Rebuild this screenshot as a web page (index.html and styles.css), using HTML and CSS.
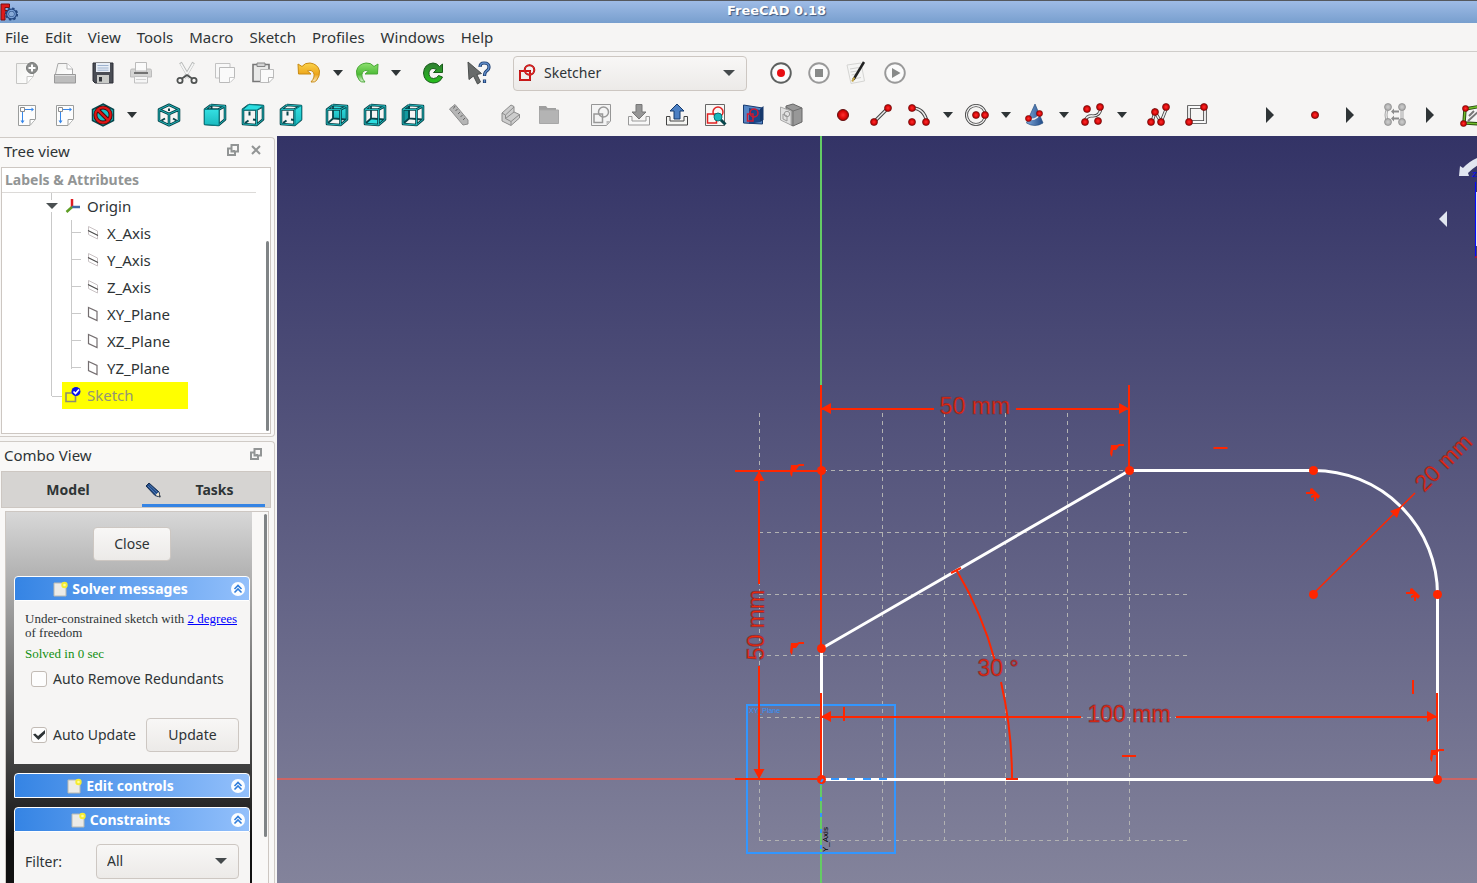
FILE: index.html
```html
<!DOCTYPE html>
<html lang="en">
<head>
<meta charset="utf-8">
<title>FreeCAD 0.18</title>
<link rel="stylesheet" href="styles.css">
</head>
<body>
<svg class="defs" aria-hidden="true">
  <defs>
    <linearGradient id="paper" x1="0" y1="0" x2="1" y2="1"><stop offset="0" stop-color="#f1f1ef"/><stop offset="1" stop-color="#ffffff"/></linearGradient>
    <linearGradient id="gold" x1="0" y1="0" x2="0" y2="1"><stop offset="0" stop-color="#fbd34b"/><stop offset="0.6" stop-color="#eda51a"/><stop offset="1" stop-color="#fbeecb"/></linearGradient>
    <linearGradient id="lime" x1="0" y1="0" x2="0" y2="1"><stop offset="0" stop-color="#8ee070"/><stop offset="0.6" stop-color="#4cba35"/><stop offset="1" stop-color="#e0f5da"/></linearGradient>
    <linearGradient id="teal" x1="0" y1="0" x2="0" y2="1"><stop offset="0" stop-color="#34e0e2"/><stop offset="1" stop-color="#1bb9bf"/></linearGradient>
    <linearGradient id="green" x1="0" y1="0" x2="0" y2="1"><stop offset="0" stop-color="#2f7d32"/><stop offset="1" stop-color="#25c11b"/></linearGradient>
    <linearGradient id="blue" x1="0" y1="0" x2="1" y2="0"><stop offset="0" stop-color="#7fa8da"/><stop offset="1" stop-color="#204a87"/></linearGradient>
    <radialGradient id="red"><stop offset="0" stop-color="#ff3030"/><stop offset="0.6" stop-color="#dd0b0b"/><stop offset="1" stop-color="#b00000"/></radialGradient>
    <radialGradient id="gray"><stop offset="0" stop-color="#cfcfcf"/><stop offset="1" stop-color="#a8a8a8"/></radialGradient>
  </defs>
  <symbol id="dot" viewBox="0 0 8 8"><circle cx="4" cy="4" r="3.5" fill="url(#red)" stroke="#6b1010" stroke-width=".7"/></symbol>
  <symbol id="gdot" viewBox="0 0 8 8"><circle cx="4" cy="4" r="3.5" fill="url(#gray)" stroke="#8b8b8b" stroke-width=".7"/></symbol>
  <symbol id="wire" viewBox="0 0 24 24">
    <path d="M2 6.500H15.500V22L2 21ZM8 2L22 3V16.500L15.500 22M8 2L2 6.500M22 3L15.500 6.500" fill="none" stroke="#07454b" stroke-width="2.600" stroke-linejoin="round"/>
    <path d="M2 6.500H15.500V22L2 21ZM8 2L22 3V16.500L15.500 22M8 2L2 6.500M22 3L15.500 6.500" fill="none" stroke="#1fb4b8" stroke-width="1" stroke-linejoin="round"/>
  </symbol>
  <symbol id="marks" viewBox="0 0 24 24"><path d="M8.500 8.500V12.500M12 16.500L15 17M4 20L7.500 17.500" stroke="#07454b" stroke-width="2"/></symbol>
  <symbol id="backbars" viewBox="0 0 24 24"><path d="M8 3V15.500L21 16.500M8 15.500L3 20" fill="none" stroke="#07454b" stroke-width="1.800"/></symbol>
  <symbol id="new" viewBox="0 0 24 24"><path d="M1.500 2.500H18.500V15L12 22.500H1.500Z" fill="url(#paper)" stroke="#c6c6c4"/><path d="M12 22V15.500H18" fill="#fff" stroke="#c6c6c4"/><circle cx="17" cy="7" r="5.500" fill="#8b8d8c" stroke="#767877"/><path d="M17 3.500v7M13.500 7h7" stroke="#fff" stroke-width="2"/></symbol>
  <symbol id="open" viewBox="0 0 24 24"><path d="M2.500 13L5 2.500H14L19.500 8V13" fill="url(#paper)" stroke="#aaa"/><path d="M14 2.500V8H19.500" fill="#fff" stroke="#b5b5b5"/><path d="M1.500 13.500H22.500V22H1.500Z" fill="#bdbdbd" stroke="#999"/><path d="M2 14.500H22" stroke="#ddd"/></symbol>
  <symbol id="save" viewBox="0 0 24 24"><path d="M2 2H22V22H4L2 20Z" fill="#4a4d55" stroke="#2c2f36"/><path d="M5 2H19V11H5Z" fill="#e8eef6"/><path d="M6.500 4.500h11M6.500 7h11M6.500 9.200h11" stroke="#9db2cf"/><path d="M6 14H18V22H6Z" fill="#c9cbc8"/><path d="M8 16H11V20.500H8Z" fill="#33363c"/></symbol>
  <symbol id="print" viewBox="0 0 24 24"><path d="M6.500 1.500H17.500V10H6.500Z" fill="#fafafa" stroke="#bbb"/><path d="M1.500 9.500Q1.500 8 3 8H6.500V11H17.500V8H21Q22.500 8 22.500 9.500V16H1.500Z" fill="#d4d4d3" stroke="#bcbcbc"/><path d="M5 12H19" stroke="#686868" stroke-width="1.800"/><path d="M5.500 15.500H18.500V22H5.500Z" fill="#f6f6f6" stroke="#c1c1c1"/><path d="M7 18.500H17" stroke="#d2d2d2"/></symbol>
  <symbol id="cut" viewBox="0 0 24 24"><path d="M5.500 1.500L14.500 17M18.500 1.500L9.500 17" stroke="#b7b9b8" stroke-width="3"/><path d="M5.800 2.500L14 16.500M18.200 2.500L10 16.500" stroke="#f6f6f6" stroke-width="1.600"/><circle cx="5" cy="19.500" r="2.600" fill="none" stroke="#505352" stroke-width="1.800"/><circle cx="19" cy="19.500" r="2.600" fill="none" stroke="#505352" stroke-width="1.800"/><path d="M7 17.500L12 14L17 17.500" fill="none" stroke="#505352" stroke-width="1.800"/></symbol>
  <symbol id="copy" viewBox="0 0 24 24"><path d="M2.500 2.500H17V17H2.500Z" fill="#f8f8f8" stroke="#c2c2c2"/><path d="M6.500 6.500H21.500V17L17 21.500H6.500Z" fill="#fafafa" stroke="#bababa"/><path d="M16.500 21.500V16.500H21.500" fill="#fff" stroke="#c7c7c7"/></symbol>
  <symbol id="paste" viewBox="0 0 24 24"><path d="M2 3.500H18V20.500H2Z" fill="#e9e9e8" stroke="#777" stroke-width="1.600"/><path d="M6 2H14V5.500H6Z" fill="#d3d3d3" stroke="#858585"/><path d="M9.500 8.500H22.500V17L18 21.500H9.500Z" fill="#fafafa" stroke="#bbb"/><path d="M17.500 21V16.500H22" fill="#fff" stroke="#b5b5b5"/></symbol>
  <symbol id="undo" viewBox="0 0 24 24"><path d="M1 3L5 5.500Q8 1.500 13 2Q21 3 22.500 10Q23 15 19.500 19.500Q18 21.500 14 21Q18.500 16 16.500 11.500Q14.500 8 10.500 10L14 13H1.500Z" fill="url(#gold)" stroke="#c98b12"/></symbol>
  <symbol id="redo" viewBox="0 0 24 24"><path d="M23 3L19 5.500Q16 1.500 11 2Q3 3 1.500 10Q1 15 4.500 19.500Q6 21.500 10 21Q5.500 16 7.500 11.500Q9.500 8 13.500 10L10 13H22.500Z" fill="url(#lime)" stroke="#4aa836"/></symbol>
  <symbol id="refresh" viewBox="0 0 24 24"><path d="M21.500 3V11.500H12.500L15.500 8.500Q10 5.500 8 11Q7.500 17 12.500 17.500Q16 17.500 17.500 14.500L21.500 16Q19 22 12 22Q3 21 2.500 12Q3 3 12 2Q16 2 18.500 5.500Z" fill="url(#green)" stroke="#195c1b"/></symbol>
  <symbol id="whats" viewBox="0 0 24 24"><path d="M1 1L14.500 12.500L9.800 13.500L13.500 21L10.500 23L6.500 15L2 18.500Z" fill="#686b6a" stroke="#4b4e4d"/><path d="M13 6Q13 2 17 2Q22 2 22 6Q22 8.500 19.500 10Q17.500 11.500 17.500 15M17.500 18.500V22" fill="none" stroke="#1e3e70" stroke-width="3.200"/><path d="M13 6Q13 2 17 2Q22 2 22 6Q22 8.500 19.500 10Q17.500 11.500 17.500 14.500M17.500 19V21.500" fill="none" stroke="#5f8cc8" stroke-width="1.400"/></symbol>
  <symbol id="sketcher" viewBox="0 0 18 18"><path d="M2 7H12V16H2Z" fill="none" stroke="#a01010" stroke-width="2"/><circle cx="11.500" cy="6" r="4.800" fill="none" stroke="#a01010" stroke-width="2"/><path d="M2 7H12V16H2Z" fill="none" stroke="#f02222" stroke-width="1"/><circle cx="11.500" cy="6" r="4.800" fill="none" stroke="#f02222"/></symbol>
  <symbol id="record" viewBox="0 0 24 24"><circle cx="12" cy="12" r="9.800" fill="#fbfbfb" stroke="#5d605f" stroke-width="1.900"/><circle cx="12" cy="12" r="4" fill="#e80d12"/></symbol>
  <symbol id="stop" viewBox="0 0 24 24"><circle cx="12" cy="12" r="9.800" fill="#fbfbfb" stroke="#999" stroke-width="1.900"/><path d="M8 8H16V16H8Z" fill="#888a89"/></symbol>
  <symbol id="play" viewBox="0 0 24 24"><circle cx="12" cy="12" r="9.800" fill="#fbfbfb" stroke="#999" stroke-width="1.900"/><path d="M9 7L17.500 12L9 17Z" fill="#888a89"/></symbol>
  <symbol id="macro" viewBox="0 0 24 24"><path d="M2 4L16 2L19.500 20L6 22.500Z" fill="#f5f5f4" stroke="#d5d5d3"/><path d="M5 8L14 6.500M5.500 11L12 10M6.500 14L11 13M7.500 18L16 16.500" stroke="#d0d0ce"/><path d="M19 1L8.500 18.500" stroke="#222" stroke-width="2.500"/><path d="M9.300 16.500L7.200 20.500" stroke="#c2a343" stroke-width="2"/></symbol>
  <symbol id="page" viewBox="0 0 24 24"><path d="M3.500 2.500H20.500V16L15 22.500H3.500Z" fill="#fdfdfd" stroke="#9b9d9c"/><path d="M15 22V16.500H20" fill="#fff" stroke="#9b9d9c"/><path d="M5.500 4.500H9.500V8.500H5.500Z" fill="none" stroke="#8c8c8c"/><path d="M10 6.500H18M7.500 9V18.500" stroke="#3787ea"/><path d="M16.500 4.500L19 6.500L16.500 8.500ZM5.500 17.500H9.500L7.500 20.500Z" fill="#3787ea"/></symbol>
  <symbol id="nodraw" viewBox="0 0 24 24"><path d="M12 1L22.500 6.500V17.500L12 23L1.500 17.500V6.500Z" fill="#1bbfc5" stroke="#07454b" stroke-width="1.500"/><circle cx="12" cy="12" r="7.600" fill="none" stroke="#450b0b" stroke-width="4"/><path d="M6.500 6.500L17.500 17.500" stroke="#450b0b" stroke-width="4"/><circle cx="12" cy="12" r="7.600" fill="none" stroke="#df1515" stroke-width="2.200"/><path d="M6.500 6.500L17.500 17.500" stroke="#df1515" stroke-width="2.200"/></symbol>
  <symbol id="iso" viewBox="0 0 24 24"><path d="M12 1.800L22 6.500V17.500L12 22.300L2 17.500V6.500ZM2 6.500L12 11L22 6.500M12 11V22" fill="none" stroke="#07454b" stroke-width="2.600" stroke-linejoin="round"/><path d="M4.500 17.500L8 15.500M19.500 17.500L16 15.500M12 5.500V8" stroke="#07454b" stroke-width="2"/><path d="M12 1.800L22 6.500V17.500L12 22.300L2 17.500V6.500ZM2 6.500L12 11L22 6.500M12 11V22" fill="none" stroke="#1fb4b8"/></symbol>
  <symbol id="front" viewBox="0 0 24 24"><use href="#wire"/><path d="M8.500 3V6" stroke="#07454b" stroke-width="2"/><path d="M1.500 6.500H16V22.500L1.500 21.500Z" fill="url(#teal)" stroke="#087e84"/></symbol>
  <symbol id="top" viewBox="0 0 24 24"><use href="#marks"/><use href="#wire"/><path d="M8 1.500L22.500 2.500L16 7H1.500Z" fill="#2cdde0" stroke="#087e84"/></symbol>
  <symbol id="right" viewBox="0 0 24 24"><use href="#marks"/><use href="#wire"/><path d="M22.500 2.500V16.500L16 22.500V6.500Z" fill="url(#teal)" stroke="#087e84"/></symbol>
  <symbol id="rear" viewBox="0 0 24 24"><path d="M8 3L22 4V16L8 15Z" fill="url(#teal)"/><use href="#backbars"/><use href="#wire"/></symbol>
  <symbol id="bottom" viewBox="0 0 24 24"><path d="M8 15.500L22 16.500L16 22L2 21Z" fill="#2cdde0"/><use href="#backbars"/><use href="#wire"/></symbol>
  <symbol id="left" viewBox="0 0 24 24"><path d="M2 7L9 2V15L2 21Z" fill="#14999f"/><use href="#backbars"/><use href="#wire"/></symbol>
  <symbol id="ruler" viewBox="0 0 24 24"><path d="M2.500 6L8 1.500L21 17V21L16 22Z" fill="#b5b5b5" stroke="#8d8d8d"/><path d="M8 3L6.500 5.500M10.500 6L8.500 8M13 9L11 11M15.500 12L13.500 14M18 15L16 17" stroke="#666"/></symbol>
  <symbol id="part" viewBox="0 0 24 24"><path d="M3 10L12 2L15 3.500V9L20.500 11.500V15L12 22.500L3 18Z" fill="#cdcdcd" stroke="#8c8c8c"/><path d="M3 10L6.500 12L15 4M6.500 12V15.500L12 18.500L20.500 11.500M6.500 15.500L15 9M12 18.500V22" fill="none" stroke="#8c8c8c"/></symbol>
  <symbol id="group" viewBox="0 0 24 24"><path d="M2 3H9L10.500 5H19V8H2Z" fill="#9f9f9f"/><path d="M2.500 7H21.500V20.500H2.500Z" fill="#b4b4b4" stroke="#a7a7a7"/></symbol>
  <symbol id="sketchnew" viewBox="0 0 24 24"><path d="M2.500 1.500H21.500V18L17.500 22.500H2.500Z" fill="#f4f4f4" stroke="#969696"/><path d="M17.500 22V18H21" fill="#bbb"/><path d="M5 11H13.500V19.500H5Z" fill="none" stroke="#989898" stroke-width="1.500"/><circle cx="14.500" cy="9" r="5" fill="none" stroke="#989898" stroke-width="1.500"/></symbol>
  <symbol id="import" viewBox="0 0 24 24"><path d="M1.500 13.500H5V18H19V13.500H22.500V22H1.500Z" fill="#f8f8f8" stroke="#999"/><path d="M9 1.500H15V9H19L12 16L5 9H9Z" fill="#969696" stroke="#777"/></symbol>
  <symbol id="export" viewBox="0 0 24 24"><path d="M1.500 13.500H5V18H19V13.500H22.500V22H1.500Z" fill="#f5f5f2" stroke="#444"/><path d="M9 16V8H5L12 1L19 8H15V16Z" fill="#4b7fc3" stroke="#143a6d"/></symbol>
  <symbol id="viewsketch" viewBox="0 0 24 24"><path d="M2.500 1.500H21.500V22.500H2.500Z" fill="#f7f7f5" stroke="#666"/><path d="M4.500 11H13.500V20H4.500Z" fill="none" stroke="#e12222" stroke-width="1.500"/><circle cx="15" cy="9" r="5" fill="none" stroke="#e12222" stroke-width="1.500"/><path d="M17 16L22.500 21.500" stroke="#07454b" stroke-width="3"/><circle cx="15" cy="14" r="4" fill="#18b8bd" stroke="#087176"/></symbol>
  <symbol id="section" viewBox="0 0 24 24"><path d="M2.500 2L21.500 5V21L2.500 20Z" fill="#5585c4" stroke="#173b70"/><path d="M8 5L19 7V19L8 21Z" fill="#1c4687"/><path d="M19 6L22.500 3V17L19 19Z" fill="#16386c"/><path d="M6.500 11H12V18H6.500Z" fill="none" stroke="#d11a30" stroke-width="1.500"/><circle cx="13" cy="10" r="4" fill="none" stroke="#d11a30" stroke-width="1.500"/></symbol>
  <symbol id="mapface" viewBox="0 0 24 24"><path d="M7 3L14 1L23 5V19L14 23L7 19Z" fill="#989898" stroke="#666"/><path d="M14 8L23 5M14 8V23M7 4L14 8" stroke="#717171" fill="none"/><path d="M1.500 4L12 8V22L1.500 17Z" fill="#e1e1e1" stroke="#a9a9a9"/><path d="M4 11L8 13V18L4 16Z" fill="none" stroke="#999"/><circle cx="8" cy="11" r="2.700" fill="none" stroke="#999"/></symbol>
  <symbol id="point" viewBox="0 0 24 24"><circle cx="12" cy="12" r="5.500" fill="url(#red)" stroke="#651010"/></symbol>
  <symbol id="smallpoint" viewBox="0 0 24 24"><circle cx="12" cy="12" r="3.600" fill="url(#red)" stroke="#651010" stroke-width=".8"/></symbol>
  <symbol id="line" viewBox="0 0 24 24"><path d="M5 19L19 5" stroke="#444" stroke-width="3.500"/><path d="M5 19L19 5" stroke="#eee" stroke-width="1.500"/><use href="#dot" x="1" y="15" width="8" height="8"/><use href="#dot" x="15" y="1" width="8" height="8"/></symbol>
  <symbol id="arc" viewBox="0 0 24 24"><path d="M5 5Q17 5 20 19" fill="none" stroke="#444" stroke-width="3.500"/><path d="M5 5Q17 5 20 19" fill="none" stroke="#eee" stroke-width="1.500"/><use href="#dot" x="1" y="1" width="8" height="8"/><use href="#dot" x="1" y="15" width="8" height="8"/><use href="#dot" x="15" y="15" width="8" height="8"/></symbol>
  <symbol id="circle" viewBox="0 0 24 24"><circle cx="11" cy="12" r="9.500" fill="none" stroke="#444" stroke-width="3"/><circle cx="11" cy="12" r="9.500" fill="none" stroke="#eee" stroke-width="1.300"/><use href="#dot" x="7" y="8" width="8" height="8"/><use href="#dot" x="16" y="8" width="8" height="8"/></symbol>
  <symbol id="conic" viewBox="0 0 24 24"><path d="M12 1L20 20Q12 25 3.500 20Z" fill="url(#blue)" stroke="#285082" stroke-width=".7"/><path d="M5 16Q14 18 17 10" fill="none" stroke="#eee" stroke-width="1.600"/><use href="#dot" x="2" y="12" width="7" height="7"/><use href="#dot" x="13" y="7" width="7" height="7"/></symbol>
  <symbol id="spline" viewBox="0 0 24 24"><path d="M4 19Q5 12 12 13Q19 13 20 5" fill="none" stroke="#444" stroke-width="3.200"/><path d="M4 19Q5 12 12 13Q19 13 20 5" fill="none" stroke="#eee" stroke-width="1.500"/><use href="#dot" x="0" y="15" width="8" height="8"/><use href="#dot" x="2" y="2" width="8" height="8"/><use href="#dot" x="15" y="0" width="8" height="8"/><use href="#dot" x="13" y="14" width="8" height="8"/></symbol>
  <symbol id="polyline" viewBox="0 0 24 24"><path d="M5 19L8 9L14 19L20 4" fill="none" stroke="#444" stroke-width="3.200"/><path d="M5 19L8 9L14 19L20 4" fill="none" stroke="#eee" stroke-width="1.500"/><use href="#dot" x="0" y="15" width="8" height="8"/><use href="#dot" x="4" y="5" width="8" height="8"/><use href="#dot" x="10" y="15" width="8" height="8"/><use href="#dot" x="15" y="0" width="8" height="8"/></symbol>
  <symbol id="rect" viewBox="0 0 24 24"><path d="M4 4H20V19H4Z" fill="none" stroke="#444" stroke-width="3.600"/><path d="M4 4H20V19H4Z" fill="none" stroke="#fafafa" stroke-width="1.800"/><use href="#dot" x="15" y="0" width="8" height="8"/><use href="#dot" x="0" y="15" width="8" height="8"/></symbol>
  <symbol id="mirror" viewBox="0 0 24 24"><path d="M5 5Q1 12 5 19M19 5V19" fill="none" stroke="#aaa" stroke-width="3"/><path d="M5 5Q1 12 5 19M19 5V19" fill="none" stroke="#eee"/><path d="M8 8.500L11 5.500V7.500H16V9.500H11V11.500ZM8 15.500L11 12.500V14.500H16V16.500H11V18.500Z" fill="#8c8c8c"/><use href="#gdot" x="1" y="0" width="8" height="8"/><use href="#gdot" x="15" y="0" width="8" height="8"/><use href="#gdot" x="1" y="15" width="8" height="8"/><use href="#gdot" x="15" y="15" width="8" height="8"/></symbol>
  <symbol id="closed" viewBox="0 0 24 24"><path d="M5 6L22 3V21L4 20Z" fill="#f5f5f5" stroke="#28470f" stroke-width="3.400"/><path d="M5 6L22 3V21L4 20Z" fill="none" stroke="#70be2c" stroke-width="1.600"/><path d="M9 13L14 8M8 18L20 7" stroke="#777" stroke-width="2"/><use href="#dot" x="2" y="2" width="7" height="7"/><use href="#dot" x="0" y="17" width="7" height="7"/></symbol>
  <symbol id="float" viewBox="0 0 12 12"><path d="M4.500 1H11V7.500H4.500ZM4 4.500H1V11H8V7.500" fill="none" stroke="#929595" stroke-width="2"/><path d="M5.500 6.500H8" stroke="#929595"/></symbol>
  <symbol id="close" viewBox="0 0 12 12"><path d="M2 2L10 10M10 2L2 10" stroke="#929595" stroke-width="2"/></symbol>
  <symbol id="axis" viewBox="0 0 12 16"><path d="M1.500 1.500L10.500 6V14L1.500 9.500Z" fill="#fff" stroke="#c9c2c4"/><path d="M1 5.500L11 10.500" stroke="#4b4b4b" stroke-width="1.200"/></symbol>
  <symbol id="plane" viewBox="0 0 12 16"><path d="M1.500 1.500L10 5.500V14.500L1.500 10.500Z" fill="#fff" stroke="#746e70" stroke-width="1.200"/></symbol>
  <symbol id="task" viewBox="0 0 16 16"><path d="M1 2H13V15H1Z" fill="#ecebe7" stroke="#b9b9b1"/><circle cx="11.500" cy="4" r="3.200" fill="#f5ec32"/><circle cx="11.500" cy="4" r="1.300" fill="#fffca0"/></symbol>
  <symbol id="fold" viewBox="0 0 14 14"><circle cx="7" cy="7" r="7" fill="#fbfdff"/><path d="M3.500 7L7 3.500L10.500 7M3.500 10.500L7 7L10.500 10.500" fill="none" stroke="#2f7ddb" stroke-width="1.600"/></symbol>
</svg>

<div class="app">
  <header class="titlebar">
    <svg class="logo" viewBox="0 0 18 18"><path d="M1 1H9.500V4.500H5V7.500H8.500V10.500H5V17H1Z" fill="#e01b1b" stroke="#7b1010"/><circle cx="11.500" cy="11" r="4" fill="none" stroke="#24477f" stroke-width="3"/><circle cx="11.500" cy="11" r="5.700" fill="none" stroke="#24477f" stroke-width="1.800" stroke-dasharray="2.400 2.070"/><circle cx="11.500" cy="11" r="3.700" fill="none" stroke="#7ba2d8" stroke-width="1.300"/></svg>
    <h1>FreeCAD 0.18</h1>
  </header>
  <nav class="menubar">
    <button>File</button><button>Edit</button><button>View</button><button>Tools</button><button>Macro</button><button>Sketch</button><button>Profiles</button><button>Windows</button><button>Help</button>
  </nav>
  <div class="toolbars">
    <div class="toolbar">
      <div class="tools"><button aria-label="New"><svg><use href="#new"/></svg></button><button aria-label="Open"><svg><use href="#open"/></svg></button><button aria-label="Save"><svg><use href="#save"/></svg></button><button aria-label="Print"><svg><use href="#print"/></svg></button></div>
      <div class="tools"><button aria-label="Cut"><svg><use href="#cut"/></svg></button><button aria-label="Copy"><svg><use href="#copy"/></svg></button><button aria-label="Paste"><svg><use href="#paste"/></svg></button></div>
      <div class="tools"><button aria-label="Undo"><svg><use href="#undo"/></svg></button><button class="drop" aria-label="Undo list"></button><button aria-label="Redo"><svg><use href="#redo"/></svg></button><button class="drop" aria-label="Redo list"></button></div>
      <div class="tools"><button aria-label="Refresh"><svg><use href="#refresh"/></svg></button></div>
      <div class="tools"><button aria-label="What's this?"><svg><use href="#whats"/></svg></button></div>
      <div class="combo workbench"><svg><use href="#sketcher"/></svg><select aria-label="Workbench"><option>Sketcher</option></select></div>
      <div class="tools"><button aria-label="Record macro"><svg><use href="#record"/></svg></button><button aria-label="Stop macro"><svg><use href="#stop"/></svg></button><button aria-label="Macros"><svg><use href="#macro"/></svg></button><button aria-label="Run macro"><svg><use href="#play"/></svg></button></div>
    </div>
    <div class="toolbar">
      <div class="tools"><button aria-label="Fit all"><svg><use href="#page"/></svg></button><button aria-label="Fit selection"><svg><use href="#page"/></svg></button><button aria-label="Draw style"><svg><use href="#nodraw"/></svg></button><button class="drop" aria-label="Draw styles"></button></div>
      <div class="tools"><button aria-label="Axonometric"><svg><use href="#iso"/></svg></button></div>
      <div class="tools"><button aria-label="Front"><svg><use href="#front"/></svg></button><button aria-label="Top"><svg><use href="#top"/></svg></button><button aria-label="Right"><svg><use href="#right"/></svg></button></div>
      <div class="tools"><button aria-label="Rear"><svg><use href="#rear"/></svg></button><button aria-label="Bottom"><svg><use href="#bottom"/></svg></button><button aria-label="Left"><svg><use href="#left"/></svg></button></div>
      <div class="tools"><button aria-label="Measure"><svg><use href="#ruler"/></svg></button></div>
      <div class="tools bar"><button aria-label="Create part"><svg><use href="#part"/></svg></button><button aria-label="Create group"><svg><use href="#group"/></svg></button></div>
      <div class="tools bar"><button aria-label="New sketch"><svg><use href="#sketchnew"/></svg></button><button aria-label="Edit sketch"><svg><use href="#import"/></svg></button><button aria-label="Leave sketch"><svg><use href="#export"/></svg></button><button aria-label="View sketch"><svg><use href="#viewsketch"/></svg></button><button aria-label="View section"><svg><use href="#section"/></svg></button><button aria-label="Map sketch"><svg><use href="#mapface"/></svg></button></div>
      <div class="tools bar"><button aria-label="Point"><svg><use href="#point"/></svg></button><button aria-label="Line"><svg><use href="#line"/></svg></button><button aria-label="Arc"><svg><use href="#arc"/></svg></button><button class="drop" aria-label="Arcs"></button><button aria-label="Circle"><svg><use href="#circle"/></svg></button><button class="drop" aria-label="Circles"></button><button aria-label="Conic"><svg><use href="#conic"/></svg></button><button class="drop" aria-label="Conics"></button><button aria-label="B-spline"><svg><use href="#spline"/></svg></button><button class="drop" aria-label="B-splines"></button></div>
      <div class="tools"><button aria-label="Polyline"><svg><use href="#polyline"/></svg></button><button aria-label="Rectangle"><svg><use href="#rect"/></svg></button></div>
      <button class="more first" aria-label="More geometries"></button>
      <div class="tools ext"><button aria-label="Coincident"><svg><use href="#smallpoint"/></svg></button><button class="more" aria-label="More constraints"></button></div>
      <div class="tools ext"><button aria-label="Symmetry"><svg><use href="#mirror"/></svg></button><button class="more" aria-label="More tools"></button></div>
      <div class="tools last"><button aria-label="B-spline tools"><svg><use href="#closed"/></svg></button></div>
    </div>
  </div>

  <main class="workspace">
    <aside class="docks">
      <section class="dock">
        <div class="dock-title"><h2>Tree view</h2><button aria-label="Float"><svg><use href="#float"/></svg></button><button aria-label="Close panel"><svg><use href="#close"/></svg></button></div>
        <div class="tree">
          <div class="tree-head">Labels &amp; Attributes</div>
          <ul class="branch">
            <li class="origin"><span class="node"><i class="expander"></i><svg class="ico" viewBox="0 0 16 16"><path d="M7 9V1" stroke="#de1c22" stroke-width="2.500"/><path d="M7 9H15" stroke="#416ba3" stroke-width="2.500"/><path d="M7 9L1.500 14" stroke="#5d9d23" stroke-width="2.500"/></svg>Origin</span>
              <ul class="leaves">
                <li><svg class="small"><use href="#axis"/></svg>X_Axis</li>
                <li><svg class="small"><use href="#axis"/></svg>Y_Axis</li>
                <li><svg class="small"><use href="#axis"/></svg>Z_Axis</li>
                <li><svg class="small"><use href="#plane"/></svg>XY_Plane</li>
                <li><svg class="small"><use href="#plane"/></svg>XZ_Plane</li>
                <li><svg class="small"><use href="#plane"/></svg>YZ_Plane</li>
              </ul>
            </li>
            <li class="sketch"><span class="picked"><svg class="ico" viewBox="0 0 16 16"><path d="M1 6H10.500V14.500H1Z" fill="none" stroke="#8d8d70" stroke-width="1.600"/><circle cx="11" cy="4.500" r="4.500" fill="#0b14ea"/><path d="M8.500 4.500L10.500 6.500L14 2.500" fill="none" stroke="#fff" stroke-width="1.700"/></svg>Sketch</span></li>
          </ul>
          <div class="thumb"></div>
        </div>
      </section>
      <section class="dock combo-view">
        <div class="dock-title"><h2>Combo View</h2><button aria-label="Float combo view"><svg><use href="#float"/></svg></button></div>
        <div class="tabs">
          <button>Model</button>
          <button class="active"><svg viewBox="0 0 16 16"><path d="M1 4L4 1L14 10L15 15L10 13.500Z" fill="#204a87" stroke="#172e50"/><path d="M3 4L11 12M4.500 3L12 10" stroke="#5078b0"/><path d="M10.500 13L13.500 10L15 15Z" fill="#f4e8d0"/><path d="M13.500 14L15 13L15.500 15.500Z" fill="#222"/></svg><span>Tasks</span></button>
        </div>
        <div class="task-frame">
          <div class="task-list">
            <button class="push close">Close</button>
            <section class="task">
              <h3><svg class="note"><use href="#task"/></svg><span>Solver messages</span><button aria-label="Fold solver messages"><svg><use href="#fold"/></svg></button></h3>
              <div class="task-body solver">
                <p>Under-constrained sketch with <a href="#dof">2 degrees</a> of freedom</p>
                <p class="ok">Solved in 0 sec</p>
                <label><input type="checkbox"> Auto Remove Redundants</label>
                <div class="update-row"><label><input type="checkbox" checked> Auto Update</label><button class="push">Update</button></div>
              </div>
            </section>
            <section class="task">
              <h3><svg class="note"><use href="#task"/></svg><span>Edit controls</span><button aria-label="Fold edit controls"><svg><use href="#fold"/></svg></button></h3>
            </section>
            <section class="task">
              <h3><svg class="note"><use href="#task"/></svg><span>Constraints</span><button aria-label="Fold constraints"><svg><use href="#fold"/></svg></button></h3>
              <div class="task-body filter"><label for="filter">Filter:</label><div class="combo"><select id="filter"><option>All</option></select></div></div>
            </section>
          </div>
          <div class="thumb"></div>
        </div>
      </section>
    </aside>

    <div class="viewport">
      <svg class="scene" role="img" aria-label="Sketch">
        <g transform="translate(-277 -136)">
          <path class="grid" d="M759.500 413V841M882.500 413V841M944.500 413V841M1005.500 413V841M1067.500 413V841M1129.500 413V841"/>
          <path class="grid" d="M759 470.500H1187M759 532.500H1187M759 594.500H1187M759 655.500H1187M759 717.500H1187M759 840.500H1187"/>
          <path d="M277 779H1600" stroke="#cc6464" stroke-width="2"/>
          <path d="M821 136V1200" stroke="#64cc64" stroke-width="2"/>
          <rect x="747" y="705" width="148" height="148" fill="none" stroke="#3296ff" stroke-width="2"/>
          <text class="tiny" x="749" y="713">XY_Plane</text>
          <g class="edge">
            <path d="M821.500 779V648.500L1129.500 470.500H1313.500A124 124 0 0 1 1437.500 594.500V779"/>
            <path d="M821 779.500H1437"/>
          </g>
          <path d="M831 779H895" stroke="#3296ff" stroke-width="2" stroke-dasharray="8 8"/>
          <path d="M821 781V853" stroke="#3296ff" stroke-width="2" stroke-dasharray="4 12"/>
          <g class="dim">
            <path d="M821 385V648M1129 385V470M821 409H934M1016 409H1129"/>
            <path d="M735 471H821M735 779H821M759 472V584M759 666V778"/>
            <path d="M821 693V779M1437 693V779M821 717H1081M1176 717H1437"/>
            <path d="M957 571Q982 613 995 661M1001 682Q1012 730 1012 778M951 573L961 568M1006 779H1018"/>
            <path d="M1313 594L1415 493" stroke-width="1.500"/>
            <path d="M1213.500 448H1227.500M1122 756H1136M844 707V721M1413 680V694"/>
          </g>
          <g class="fill">
            <path d="M821 408.500L831 403V414ZM1129 408.500L1119 403V414ZM759 471L753.500 481H764.500ZM759 779L753.500 769H764.500ZM821 716.500L831 711V722ZM1437 716.500L1427 711V722ZM1401 507L1390 511L1397 518Z"/>
            <circle cx="821.500" cy="470.500" r="4.500"/><circle cx="821.500" cy="648.500" r="4.500"/><circle cx="821.500" cy="779.500" r="4.500"/><circle cx="1129.500" cy="470.500" r="4.500"/><circle cx="1313.500" cy="470.500" r="4.500"/><circle cx="1313.500" cy="594.500" r="4.500"/><circle cx="1437.500" cy="594.500" r="4.500"/><circle cx="1437.500" cy="779.500" r="4.500"/>
            <path id="coin" d="M791 465H797L799 464H804V466H799L796 470H793L792 477L790 474Z"/>
            <use href="#coin" y="178"/><use href="#coin" x="320" y="-20"/><use href="#coin" x="640" y="285"/>
            <path id="tangent" d="M1306 492H1310V489L1312 488L1320 496L1318 499L1316 497V501H1314V497L1311 498V496L1314 494H1306Z"/>
            <use href="#tangent" x="100" y="100"/>
          </g>
          <path d="M821 782L823 779" stroke="#3296ff" stroke-width="2"/>
          <text class="value" x="975" y="414">50 mm</text>
          <text class="value" x="1129" y="722">100 mm</text>
          <text class="value" x="998" y="676">30 °</text>
          <text class="value" transform="translate(764 625) rotate(-90)">50 mm</text>
          <text class="value" transform="translate(1449 468) rotate(-45)">20 mm</text>
          <text class="axis-name" transform="translate(828 852) rotate(-90)">Y_Axis</text>
          <path d="M1459 176L1460 166L1463 168Q1470 160 1482 156V163Q1474 167 1468 173L1469 176Z" fill="#e1e6f0"/>
          <path d="M1439 219L1447 211V227Z" fill="#e1e6f0"/>
          <text class="cube-name" x="1472" y="177">Z</text>
          <path d="M1475.500 182V257" stroke="#0808ff"/><path d="M1476.500 192V246" stroke="#e1e6f0"/><path d="M1475 257H1477" stroke="#f00"/>
        </g>
      </svg>
    </div>
  </main>
</div>
</body>
</html>
```

FILE: styles.css
```css
* { box-sizing: border-box; }

body {
  margin: 0;
  overflow: hidden;
  background: #f6f5f4;
  color: #2e3436;
  font: 15px/20px "Noto Sans", "Open Sans", sans-serif;
}

button, select, input { font: inherit; color: inherit; margin: 0; }
button { padding: 0; border: 0; background: none; }
h1, h2, h3, p, ul { margin: 0; padding: 0; }
ul { list-style: none; }
svg { display: block; }
.defs { position: absolute; width: 0; height: 0; }

.app { display: flex; flex-direction: column; height: 100vh; }

.titlebar {
  display: flex;
  align-items: center;
  flex: none;
  height: 23px;
  border-top: 1px solid #55585e;
  background: linear-gradient(#9ebbe6, #789fce);
}
.logo { width: 18px; height: 18px; }
.titlebar h1 {
  flex: 1;
  padding: 0 0 2px 58px;
  text-align: center;
  color: #fff;
  font: bold 13px/20px "DejaVu Sans", sans-serif;
  text-shadow: 1px 1px 1px #40597e;
}

.menubar {
  display: flex;
  flex: none;
  gap: 16px;
  height: 29px;
  padding: 0 5px;
  border-bottom: 1px solid #cfcdca;
}

.toolbars { flex: none; overflow: hidden; }
.toolbar { display: flex; align-items: center; gap: 8px; height: 42px; padding-left: 8px; }
.tools { display: flex; flex: none; }
.tools.bar { margin-left: 6px; }
.tools.ext { gap: 9px; margin-left: 11px; }
.tools.last { margin-left: 8px; }
.tools button { display: grid; place-items: center; width: 38px; height: 34px; }
.tools svg { width: 24px; height: 24px; }
.tools .drop { width: 20px; }
.drop::before { content: ""; border: 5px solid transparent; border-top: 6px solid #2e3436; border-bottom: 0; }
.more, .tools .more { display: grid; place-items: center; flex: none; width: 14px; }
.more::before { content: ""; border: 8px solid transparent; border-left-color: #2e3436; border-right: 0; }
.more.first { margin-left: 39px; }

.combo {
  position: relative;
  border: 1px solid #cdc7c2;
  border-radius: 4px;
  background: linear-gradient(#f8f7f6, #eceae8);
  font-size: 14px;
}
.combo::after {
  content: "";
  position: absolute;
  top: 13px;
  right: 11px;
  border: 6px solid transparent;
  border-top-color: #454a4c;
  border-bottom: 0;
  pointer-events: none;
}
.combo select {
  width: 100%;
  height: 33px;
  padding: 0 30px 1px 10px;
  border: 0;
  background: none;
  appearance: none;
}
.workbench { display: flex; align-items: center; width: 234px; margin: 0 7px; }
.workbench svg { position: absolute; left: 4px; width: 18px; height: 18px; }
.workbench select { padding-left: 30px; }

.workspace { display: flex; flex: 1; min-height: 0; }
.docks {
  display: flex;
  flex-direction: column;
  flex: none;
  gap: 4px;
  width: 277px;
  padding: 1px 2px 0 0;
}
.dock {
  flex: none;
  padding: 0 3px 2px 1px;
  border: 1px solid #d0cbc6;
  border-left: 0;
  border-radius: 0 4px 4px 0;
  background: #f9f8f7;
}
.dock-title { display: flex; gap: 11px; height: 29px; padding: 3px 9px 0 3px; }
.dock-title h2 { flex: 1; font: inherit; }
.dock-title button { width: 12px; height: 18px; }
.dock-title svg { width: 12px; height: 12px; }

.tree {
  position: relative;
  min-height: 267px;
  border: 1px solid #cdc7c2;
  background: #fff;
}
.tree-head {
  height: 25px;
  margin-right: 14px;
  padding: 2px 3px;
  border-bottom: 1px solid #dcdad8;
  color: #929595;
  font-size: 14px;
  font-weight: bold;
}
.branch { position: relative; width: 186px; }
.branch::before { content: ""; position: absolute; top: 0; left: 49px; height: 203px; border-left: 1px solid #c9c9c9; }
.origin .node { display: flex; align-items: center; gap: 6px; height: 27px; padding: 0 0 2px 44px; }
.expander { position: relative; width: 14px; height: 12px; background: #fff; }
.expander::before { content: ""; position: absolute; top: 3px; border: 6px solid transparent; border-top-color: #4b5052; border-bottom: 0; }
.ico { flex: none; width: 16px; height: 16px; }
.origin .node .ico { margin-left: -1px; }
.leaves { position: relative; padding-left: 69px; }
.leaves::before { content: ""; position: absolute; top: 0; left: 69px; height: 149px; border-left: 1px solid #c9c9c9; }
.leaves li { display: flex; align-items: center; height: 27px; padding-bottom: 2px; }
.leaves li::before { content: ""; width: 10px; margin-right: 6px; border-top: 1px solid #c9c9c9; }
.small { width: 12px; height: 16px; margin-right: 8px; }
.sketch { padding-left: 50px; }
.sketch::before { content: ""; position: absolute; margin-top: 14px; width: 10px; border-top: 1px solid #c9c9c9; }
.picked { display: flex; align-items: center; gap: 6px; height: 27px; margin-left: 10px; padding: 0 0 2px 3px; background: #ff0; color: #929578; }
.thumb { position: absolute; right: 1px; width: 3px; border-radius: 2px; background: #808486; }
.tree .thumb { top: 73px; bottom: 2px; }

.combo-view { display: flex; flex-direction: column; flex: 1; min-height: 0; padding-bottom: 0; border-bottom: 0; border-radius: 0 4px 0 0; overflow: hidden; }
.tabs { display: flex; flex: none; height: 37px; padding-right: 5px; border: 1px solid #cdc7c2; background: #d6d4d2; font-weight: bold; font-size: 14px; }
.tabs button { flex: 1 1 0; padding-right: 8px; }
.tabs .active { display: flex; flex: 0 0 123px; align-items: center; padding: 3px 13px 0 3px; border-bottom: 3px solid #3584e4; }
.tabs .active span { flex: 1; padding-left: 16px; }
.tabs .active svg { width: 16px; height: 16px; }
.task-frame {
  position: relative;
  flex: 1;
  min-height: 0;
  margin: 3px 2px 0 4px;
  padding-right: 16px;
  overflow: hidden;
  border: 1px solid #cdc7c2;
  border-bottom: 0;
  background: #f9f8f7;
  font-size: 14px;
}
.task-frame .thumb { top: 2px; height: 323px; }
.task-list {
  display: flex;
  flex-direction: column;
  gap: 9px;
  padding: 15px 2px 0 8px;
  background: linear-gradient(#d8d8d8, #111 330px);
}
.push { border: 1px solid #cdc7c2; border-radius: 4px; background: linear-gradient(#f8f7f6, #eceae8); }
.close { align-self: center; width: 78px; height: 34px; margin-bottom: 6px; }
.task h3 {
  display: flex;
  align-items: center;
  justify-content: center;
  position: relative;
  height: 25px;
  padding-right: 23px;
  border: 1px solid #fff;
  border-radius: 4px 4px 0 0;
  background: linear-gradient(90deg, #3584e4, #93c0fb);
  color: #fff;
  font-size: 14px;
}
.note { width: 16px; height: 16px; margin-right: 3px; }
.task h3 button { position: absolute; right: 4px; }
.task h3 button svg { width: 14px; height: 14px; }
.task-body { background: #f6f5f4; }
.solver { padding: 11px 11px 12px; }
.solver p { margin-bottom: 7px; font: 13px/14px "Liberation Serif", serif; }
.solver a { color: #00f; }
.solver .ok { margin-bottom: 8px; color: #128f12; }
.solver label { display: flex; align-items: center; gap: 6px; padding-left: 6px; white-space: nowrap; }
input[type="checkbox"] { display: grid; place-items: center; width: 16px; height: 16px; border: 1px solid #c2bbb5; border-radius: 3px; background: #fdfdfd; appearance: none; }
input:checked::before { content: ""; width: 12px; height: 10px; background: #2e3436; clip-path: polygon(0 45%, 18% 35%, 42% 60%, 100% 0, 100% 35%, 45% 100%); }
.update-row { display: flex; align-items: center; justify-content: space-between; margin-top: 29px; }
.update-row .push { width: 93px; height: 34px; }
.filter { display: flex; align-items: center; justify-content: space-between; min-height: 120px; padding: 12px 11px 73px; }
.filter .combo { width: 143px; }

.viewport { flex: 1; min-width: 0; background: linear-gradient(#333366, #83839b); }
.scene { width: 100%; height: 100%; font-family: "Liberation Sans", Arial, sans-serif; }
.grid { fill: none; stroke: #b2b2b2; stroke-dasharray: 4 4; }
.edge { fill: none; stroke: #fff; stroke-width: 3; }
.dim { fill: none; stroke: #ff2600; stroke-width: 2; }
.fill { fill: #ff2600; }
.value { fill: #f52808; stroke: #702838; stroke-width: 1; stroke-opacity: .6; font-size: 23px; text-anchor: middle; }
.tiny { fill: #3296ff; font-size: 7px; }
.axis-name { fill: #000; font-size: 8px; }
.cube-name { fill: #00f; font-size: 8px; }
```
